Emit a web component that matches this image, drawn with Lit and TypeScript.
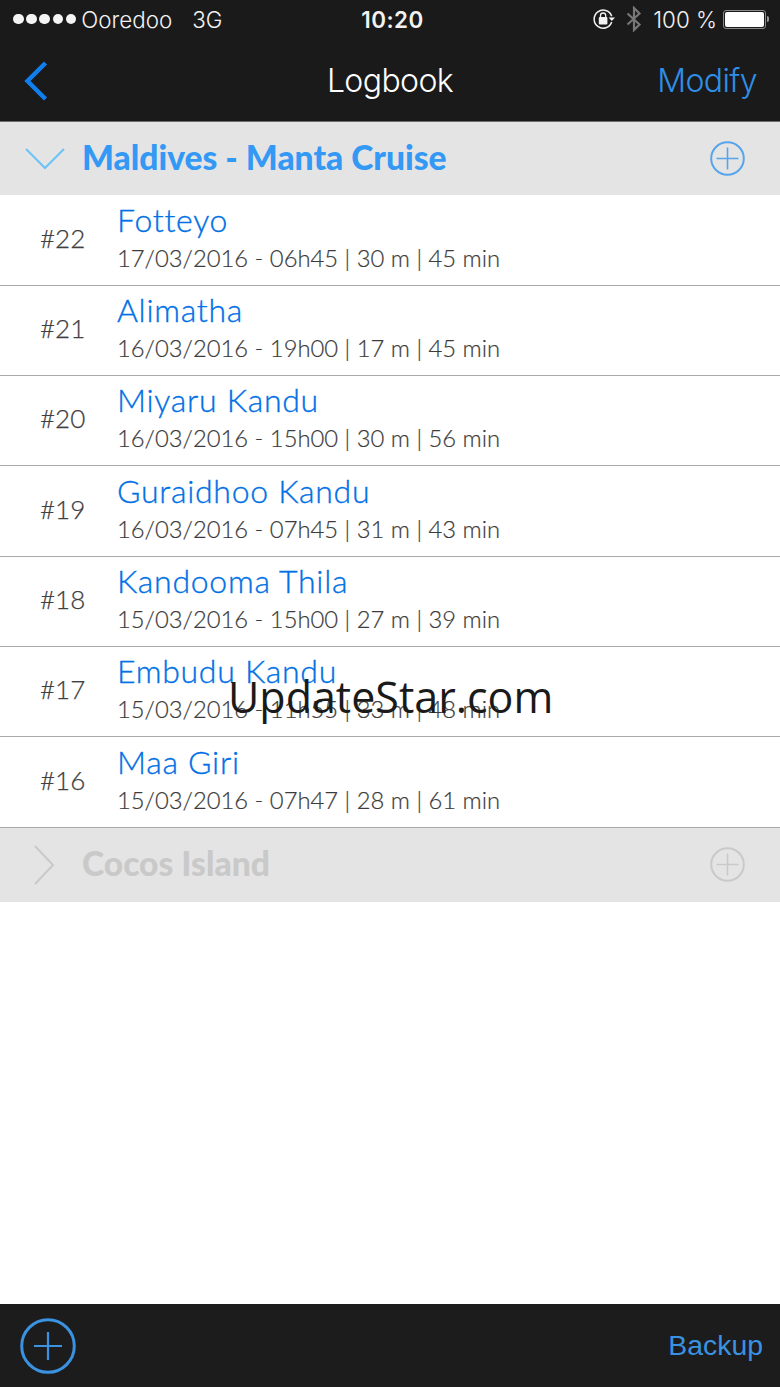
import { LitElement, html, css, svg } from "lit";
import { customElement } from "lit/decorators.js";

const rows = [
  ["#22", "Fotteyo", "17/03/2016 - 06h45 | 30 m | 45 min"],
  ["#21", "Alimatha", "16/03/2016 - 19h00 | 17 m | 45 min"],
  ["#20", "Miyaru Kandu", "16/03/2016 - 15h00 | 30 m | 56 min"],
  ["#19", "Guraidhoo Kandu", "16/03/2016 - 07h45 | 31 m | 43 min"],
  ["#18", "Kandooma Thila", "15/03/2016 - 15h00 | 27 m | 39 min"],
  ["#17", "Embudu Kandu", "15/03/2016 - 11h55 | 33 m | 48 min"],
  ["#16", "Maa Giri", "15/03/2016 - 07h47 | 28 m | 61 min"],
];

const plus = (size: number, color: string, sw: number, arm: number, psw = 1.6) => html`<svg width=${size} height=${size} viewBox="0 0 ${size} ${size}" fill="none" stroke=${color} stroke-width=${sw}>
  ${svg`<circle cx=${size / 2} cy=${size / 2} r=${size / 2 - sw / 2 - 0.2}></circle>
  <path stroke-width=${psw} d="M${size / 2 - arm} ${size / 2}H${size / 2 + arm}M${size / 2} ${size / 2 - arm}V${size / 2 + arm}"></path>`}
</svg>`;

@customElement("app-root")
export class AppRoot extends LitElement {
  static styles = css`
    :host {
      display: block;
      position: relative;
      width: 780px;
      height: 1387px;
      overflow: hidden;
      background: #fff;
      font-family: "Lato", "Open Sans", sans-serif;
    }
    .page { display: flex; flex-direction: column; height: 100%; }
    .top { background: #1a1a1a; height: 122px; box-sizing: border-box; flex: none; display: flex; flex-direction: column; border-bottom: 1px solid #6e6e6e; }
    .status { height: 40px; box-sizing: border-box; display: flex; align-items: center; padding: 0 11px 2px 13px; color: #f2f2f2; font-family: "Inter", sans-serif; font-size: 22.4px; font-weight: 300; position: relative; }
    .dots { display: flex; gap: 2.6px; margin-right: 5px; }
    .dots i { width: 10.6px; height: 10.6px; border-radius: 50%; background: #f4f4f4; display: block; }
    .net { margin-left: 20px; }
    .time { position: absolute; left: 5px; right: 0; text-align: center; font-weight: 600; font-size: 22.4px; letter-spacing: 0.5px; }
    .right { margin-left: auto; display: flex; align-items: center; }
    .pct { margin: 0 6px 0 11px; }
    .batt { width: 43px; height: 19px; border: 1px solid #8a8a8a; border-radius: 3px; padding: 1px; box-sizing: border-box; margin-right: 1px; }
    .batt b { display: block; height: 100%; background: #fff; border-radius: 2px; }
    .nub { width: 2px; height: 6px; background: #999; border-radius: 0 2px 2px 0; }
    .nav { flex: 1; display: flex; align-items: center; justify-content: space-between; padding: 0 23px 0 22px; position: relative; }
    .nav h1 { position: absolute; left: 0; right: 0; margin: 0; text-align: center; font: 300 32px "Inter", sans-serif; color: #fff; letter-spacing: -0.6px; }
    .nav .mod { font: 300 32px "Inter", sans-serif; color: #2f8fe6; letter-spacing: -0.6px; }
    .section { flex: none; display: flex; align-items: center; background: #e4e4e4; padding: 0 35px 4px 25px; font-weight: 900; font-size: 33.6px; box-sizing: border-box; }
    .section .name { margin-left: 17px; flex: 1; }
    .section svg { display: block; position: relative; top: 2px; }
    .s1 { color: #3399f5; height: 73.45px; }
    .s2 { color: #c9c9c9; height: 74.25px; }
    .row { flex: none; height: 90.33px; box-sizing: border-box; border-bottom: 1px solid #a9a9a9; display: flex; align-items: center; background: #fff; }
    .num { width: 117px; padding-left: 40px; box-sizing: border-box; font-size: 26px; color: #404040; font-weight: 300; margin-bottom: 5px; -webkit-text-stroke: 0.25px #404040; }
    .title { font-size: 32px; font-weight: 300; color: #0070e6; line-height: 38px; letter-spacing: 0.72px; margin-top: -7px; -webkit-text-stroke: 0.35px #0070e6; }
    .sub { font-size: 23.8px; font-weight: 300; color: #3c3c3c; line-height: 30px; margin-top: 4px; -webkit-text-stroke: 0.2px #3c3c3c; }
    .fill { flex: 1; }
    .bottom { flex: none; height: 83px; background: #1c1c1c; display: flex; align-items: center; justify-content: space-between; padding: 0 17px 0 20px; }
    .bottom span { font: 400 28.4px "Liberation Sans", sans-serif; color: #3a92e0; }
    .wm { position: absolute; left: 228px; top: 669px; font: 400 43px "Open Sans", sans-serif; color: #1a1a1a; line-height: 56px; white-space: nowrap; }
  `;

  render() {
    return html`<div class="page">
      <div class="top">
        <div class="status">
          <div class="dots"><i></i><i></i><i></i><i></i><i></i></div>
          <span>Ooredoo</span><span class="net">3G</span>
          <span class="time">10:20</span>
          <div class="right">
            <svg width="22" height="22" viewBox="0 0 22 22" fill="none" stroke="#f2f2f2" stroke-width="1.5">
              <path d="M18.7 8.3A9 9 0 1 0 18.7 14"></path>
              <path d="M22 9.5l-3.2 3.6-3.2-3.6z" fill="#f2f2f2" stroke="none"></path>
              <rect x="5.8" y="9" width="8.6" height="7.5" rx="1" fill="#f2f2f2" stroke="none"></rect>
              <path d="M7.5 9.5V7.6a2.6 2.6 0 0 1 5.2 0V9.5" stroke-width="1.3"></path>
            </svg>
            <svg style="margin-left:11px" width="16" height="26" viewBox="0 0 16 26" fill="none" stroke="#777" stroke-width="2.2"><path d="M1.5 7.5L13.5 18.5L8 24V2L13.5 7.5L1.5 18.5"></path></svg>
            <span class="pct">100 %</span>
            <div class="batt"><b></b></div><div class="nub"></div>
          </div>
        </div>
        <div class="nav">
          <svg width="26" height="40" viewBox="0 0 26 40" fill="none" stroke="#0f7ff0" stroke-width="4.4"><path d="M23.5 2L5.5 20L23.5 38"></path></svg>
          <h1>Logbook</h1>
          <span class="mod">Modify</span>
        </div>
      </div>
      <div class="section s1">
        <svg width="40" height="26" viewBox="0 0 40 26" fill="none" stroke="#6cc3f7" stroke-width="2"><path d="M1 3L20 22L39 3"></path></svg>
        <span class="name">Maldives - Manta Cruise</span>
        ${plus(35, "#56a5ec", 2, 11)}
      </div>
      ${rows.map(
        (r) => html`<div class="row">
          <div class="num">${r[0]}</div>
          <div>
            <div class="title">${r[1]}</div>
            <div class="sub">${r[2]}</div>
          </div>
        </div>`
      )}
      <div class="section s2">
        <svg style="margin-left:7px;margin-right:26px" width="24" height="40" viewBox="0 0 24 40" fill="none" stroke="#c9c9c9" stroke-width="2"><path d="M3 1L21 20L3 39"></path></svg>
        <span class="name" style="margin-left:0">Cocos Island</span>
        ${plus(35, "#c9c9c9", 2, 11)}
      </div>
      <div class="fill"></div>
      <div class="bottom">
        ${plus(56, "#3a92e0", 3, 14, 2.2)}
        <span>Backup</span>
      </div>
    </div>
    <div class="wm">UpdateStar.com</div>`;
  }
}
